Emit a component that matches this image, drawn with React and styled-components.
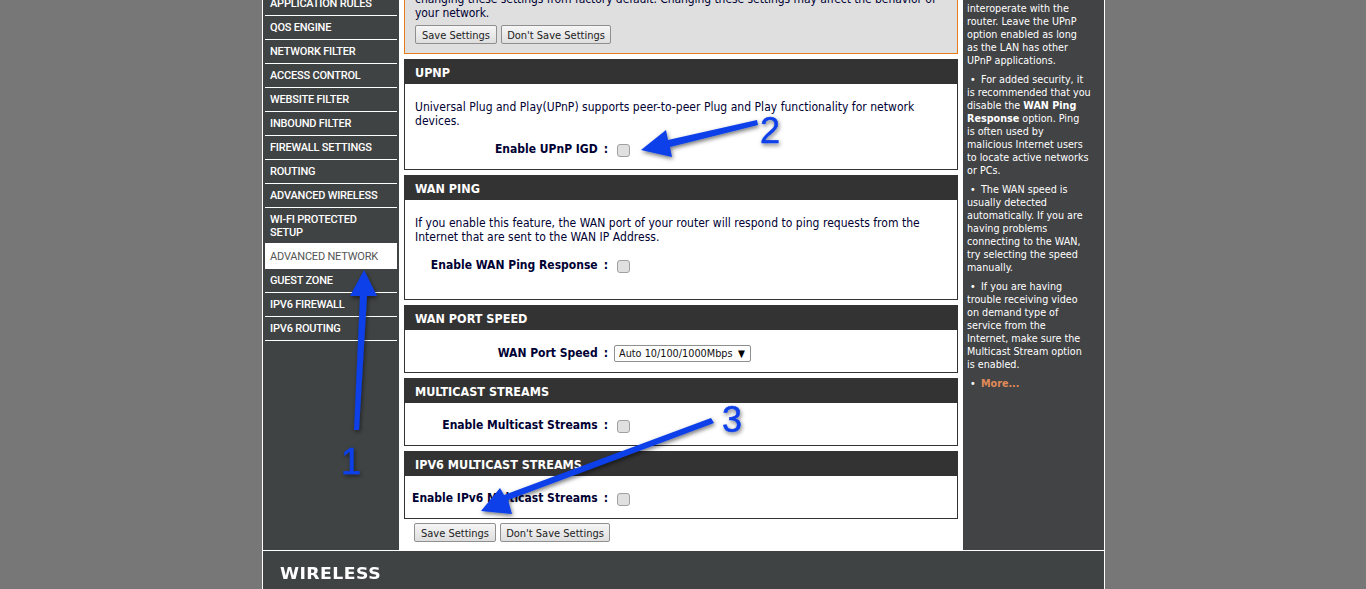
import React from "react";
import styled, { createGlobalStyle } from "styled-components";

const Global = createGlobalStyle`
  html, body { margin: 0; padding: 0; height: 589px; overflow: hidden; background: #777777; }
`;
const textFont = `"DejaVu Sans Condensed", "DejaVu Sans", Tahoma, sans-serif`;
const Frame = styled.div`
  position: relative;
  box-sizing: border-box;
  width: 843px;
  height: 589px;
  margin-left: 262px;
  border-left: 1px solid #fff;
  border-right: 1px solid #fff;
  overflow: hidden;
  font-family: ${textFont};
`;
const Columns = styled.div`
  display: flex;
  height: 550px;
  overflow: hidden;
`;
const Nav = styled.ul`
  list-style: none;
  width: 136px;
  flex: none;
  margin: 0;
  padding: 0 2px;
  box-sizing: border-box;
  background: #404344;
`;
const NavInner = styled.div`
  margin-top: -8px;
`;
const NavItem = styled.li`
  box-sizing: border-box;
  padding: ${p => (p.$active ? "6px 5px 5px" : "5px 5px 4px")};
  min-height: 24px;
  line-height: 13px;
  font-family: Roboto, "Liberation Sans", Arial, sans-serif;
  font-size: 11px;
  letter-spacing: -0.2px;
  font-weight: ${p => (p.$active ? 400 : 500)};
  color: ${p => (p.$active ? "#555" : "#fff")};
  background: ${p => (p.$active ? "#fff" : "transparent")};
  border-bottom: 1px solid #fff;
  white-space: pre-line;
`;
const Main = styled.main`
  width: 564px;
  flex: none;
  box-sizing: border-box;
  padding: 0 5px;
  background: #fff;
`;
const Notice = styled.div`
  box-sizing: border-box;
  margin-top: -10px;
  height: 64px;
  padding: 2px 10px 0;
  background: #dfdfdf;
  border: 1px solid #e87b1e;
  border-top: 0;
  font-size: 12px;
  line-height: 14px;
  letter-spacing: -0.06px;
  color: #000033;
`;
const ButtonRow = styled.div`
  display: flex;
  gap: 4px;
  margin: ${p => p.$margin || "5px 0 0"};
`;
const Button = styled.button`
  box-sizing: border-box;
  height: 19px;
  padding: 2px 0 0;
  width: ${p => p.$w}px;
  font-family: ${textFont};
  font-size: 11px;
  line-height: 15px;
  letter-spacing: 0;
  color: #222;
  background: linear-gradient(#f6f6f6, #dedede);
  border: 1px solid #8f8f8f;
  border-radius: 2px;
  white-space: nowrap;
`;
const Section = styled.section`
  margin-top: 5px;
`;
const SectionHead = styled.h2`
  margin: 0;
  height: 25px;
  box-sizing: border-box;
  padding: 0 11px;
  background: #333333;
  color: #fff;
  font-family: ${textFont};
  font-size: 12.5px;
  font-weight: 700;
  line-height: 28px;
`;
const SectionBody = styled.div`
  box-sizing: border-box;
  height: ${p => p.$h}px;
  border: 1px solid #333;
  border-top: 0;
  padding: ${p => p.$pad || "0"};
`;
const Desc = styled.p`
  margin: 0 10px 0;
  font-size: 12px;
  line-height: 14px;
  letter-spacing: 0.03px;
  color: #000033;
  white-space: pre-line;
`;
const Row = styled.div`
  display: flex;
  align-items: center;
  margin-top: ${p => p.$mt || 0}px;
`;
const Label = styled.label`
  width: 203px;
  flex: none;
  text-align: right;
  font-size: 12px;
  font-weight: 700;
  color: #000033;
  white-space: nowrap;
`;
const Colon = styled.span`
  margin-left: 6px;
`;
const Check = styled.input.attrs({ type: "checkbox" })`
  appearance: none;
  box-sizing: border-box;
  width: 13px;
  height: 13px;
  margin: 3px 0 0 9px;
  background: #e0e0e0;
  border: 1px solid #a0a0a0;
  border-radius: 3px;
`;
const SelectBox = styled.div`
  box-sizing: border-box;
  display: flex;
  align-items: center;
  justify-content: space-between;
  width: 137px;
  height: 17px;
  margin: 2px 0 0 6px;
  padding: 0 5px 0 4px;
  border: 1px solid #8f8f8f;
  border-radius: 2px;
  font-size: 10.8px;
  color: #111;
  background: #fff;
`;
const Caret = styled.span`
  font-size: 10px;
  color: #000;
`;
const Help = styled.aside`
  width: 141px;
  flex: none;
  box-sizing: border-box;
  padding: 2px 4px 0;
  background: #424345;
  color: #fff;
  font-size: 10.7px;
  line-height: 13px;
`;
const HelpPara = styled.p`
  margin: 0 0 6px;
  white-space: pre-line;
`;
const Bullet = styled.span`
  display: inline-block;
  width: 14px;
  text-indent: 3px;
  &::before { content: "•"; }
`;
const More = styled.a`
  color: #e08a58;
  font-weight: 700;
`;
const Footer = styled.footer`
  box-sizing: border-box;
  height: 39px;
  border-top: 1px solid #fff;
  background: #404344;
  padding: 13px 0 0 17px;
`;
const Wireless = styled.div`
  display: inline-block;
  transform-origin: left center;
  transform: scaleX(1.15);
  font-family: "DejaVu Sans", sans-serif;
  font-weight: 700;
  font-size: 15px;
  line-height: 15px;
  letter-spacing: 0.4px;
  color: #fff;
`;
const Overlay = styled.svg`
  position: absolute;
  left: -263px;
  top: 0;
  width: 1366px;
  height: 589px;
  pointer-events: none;
`;
const Num = styled.text`
  font-family: "Liberation Sans", Arial, sans-serif;
  font-size: 36px;
  fill: #0a3fe8;
  stroke: #0a3fe8;
  stroke-width: 0.5px;
`;

const navTop = ["APPLICATION RULES","QOS ENGINE","NETWORK FILTER","ACCESS CONTROL","WEBSITE FILTER","INBOUND FILTER","FIREWALL SETTINGS","ROUTING","ADVANCED WIRELESS","WI-FI PROTECTED\nSETUP"];
const navBottom = ["GUEST ZONE","IPV6 FIREWALL","IPV6 ROUTING"];

export default function App() {
  return (
    <>
      <Global />
      <Frame>
        <Columns>
          <Nav>
            <NavInner>
              {navTop.map(t => <NavItem key={t}>{t}</NavItem>)}
              <NavItem $active>ADVANCED NETWORK</NavItem>
              {navBottom.map(t => <NavItem key={t}>{t}</NavItem>)}
            </NavInner>
          </Nav>
          <Main>
            <Notice>
              changing these settings from factory default. Changing these settings may affect the behavior of your network.
              <ButtonRow>
                <Button $w={82}>Save Settings</Button>
                <Button $w={110}>Don't Save Settings</Button>
              </ButtonRow>
            </Notice>
            <Section>
              <SectionHead>UPNP</SectionHead>
              <SectionBody $h={86} $pad="16px 0 0">
                <Desc>Universal Plug and Play(UPnP) supports peer-to-peer Plug and Play functionality for network{"\n"}devices.</Desc>
                <Row $mt={13}><Label>Enable UPnP IGD<Colon>:</Colon></Label><Check /></Row>
              </SectionBody>
            </Section>
            <Section>
              <SectionHead>WAN PING</SectionHead>
              <SectionBody $h={100} $pad="16px 0 0">
                <Desc>If you enable this feature, the WAN port of your router will respond to ping requests from the{"\n"}Internet that are sent to the WAN IP Address.</Desc>
                <Row $mt={13}><Label>Enable WAN Ping Response<Colon>:</Colon></Label><Check /></Row>
              </SectionBody>
            </Section>
            <Section>
              <SectionHead>WAN PORT SPEED</SectionHead>
              <SectionBody $h={43} $pad="13px 0 0">
                <Row><Label>WAN Port Speed<Colon>:</Colon></Label><SelectBox>Auto 10/100/1000Mbps<Caret>▼</Caret></SelectBox></Row>
              </SectionBody>
            </Section>
            <Section>
              <SectionHead>MULTICAST STREAMS</SectionHead>
              <SectionBody $h={43} $pad="14px 0 0">
                <Row><Label>Enable Multicast Streams<Colon>:</Colon></Label><Check /></Row>
              </SectionBody>
            </Section>
            <Section>
              <SectionHead>IPV6 MULTICAST STREAMS</SectionHead>
              <SectionBody $h={43} $pad="14px 0 0">
                <Row><Label>Enable IPv6 Multicast Streams<Colon>:</Colon></Label><Check /></Row>
              </SectionBody>
            </Section>
            <ButtonRow $margin="4px 0 0 10px">
              <Button $w={82}>Save Settings</Button>
              <Button $w={110}>Don't Save Settings</Button>
            </ButtonRow>
          </Main>
          <Help>
            <HelpPara>interoperate with the{"\n"}router. Leave the UPnP{"\n"}option enabled as long{"\n"}as the LAN has other{"\n"}UPnP applications.</HelpPara>
            <HelpPara><Bullet />For added security, it{"\n"}is recommended that you{"\n"}disable the <b>WAN Ping{"\n"}Response</b> option. Ping{"\n"}is often used by{"\n"}malicious Internet users{"\n"}to locate active networks{"\n"}or PCs.</HelpPara>
            <HelpPara><Bullet />The WAN speed is{"\n"}usually detected{"\n"}automatically. If you are{"\n"}having problems{"\n"}connecting to the WAN,{"\n"}try selecting the speed{"\n"}manually.</HelpPara>
            <HelpPara><Bullet />If you are having{"\n"}trouble receiving video{"\n"}on demand type of{"\n"}service from the{"\n"}Internet, make sure the{"\n"}Multicast Stream option{"\n"}is enabled.</HelpPara>
            <HelpPara><Bullet /><More>More...</More></HelpPara>
          </Help>
        </Columns>
        <Footer><Wireless>WIRELESS</Wireless></Footer>
        <Overlay viewBox="0 0 1366 589">
          <defs>
            <filter id="sh" x="-20%" y="-20%" width="140%" height="140%">
              <feDropShadow dx="1" dy="2" stdDeviation="2" floodColor="#000" floodOpacity="0.55" />
            </filter>
          </defs>
          <g filter="url(#sh)" fill="#0a3fe8">
            <path d="M354 430 L359 430 L367 296 L377 296 L364 270 L350 296 L360 296 Z" />
            <path d="M757 120 L758 125 L670 147 L672 157 L641 150 L666 130 L668 140 Z" />
            <path d="M711 418 L714 423 L508 500 L512 514 L481 511 L500 488 L504 495 Z" />
            <Num x="341" y="474">1</Num>
            <Num x="760" y="143">2</Num>
            <Num x="722" y="432">3</Num>
          </g>
        </Overlay>
      </Frame>
    </>
  );
}
